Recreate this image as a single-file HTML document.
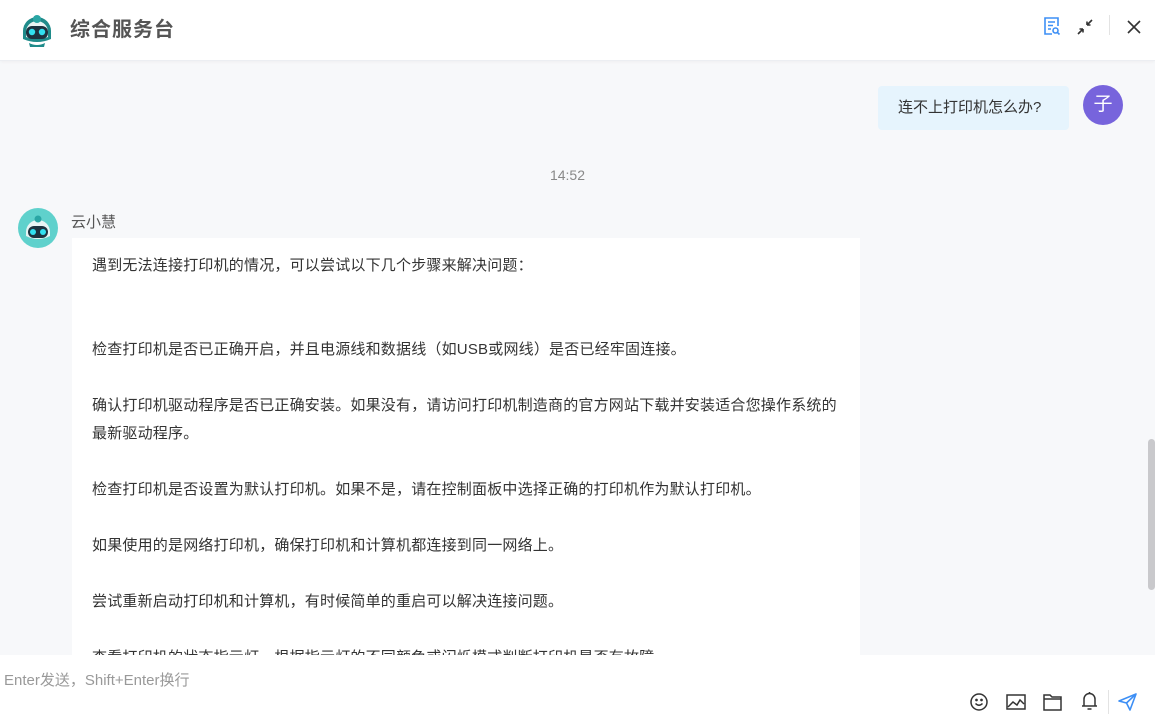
<!DOCTYPE html>
<html><head><meta charset="utf-8"><style>
*{margin:0;padding:0;box-sizing:border-box}
body{width:1155px;height:720px;overflow:hidden;background:#f7f8fa;font-family:"Liberation Sans","Noto Sans CJK SC",sans-serif;position:relative;color:#333}
.hdr{position:absolute;left:0;top:0;width:1155px;height:61px;background:#fff;border-bottom:1px solid #eceef2;box-shadow:0 1px 3px rgba(0,0,0,0.04)}
.title{position:absolute;left:70px;top:13px;font-size:20px;color:#555;font-weight:bold;letter-spacing:1px}
.abs{position:absolute}
.bubble{position:absolute;left:878px;top:86px;width:191px;height:44px;background:#e6f4fd;border-radius:4px;font-size:15px;line-height:44px;padding-left:20px;color:#333}
.uav{position:absolute;left:1083px;top:85px;width:40px;height:40px;border-radius:50%;background:#7764dc;color:#fff;font-size:19px;text-align:center;line-height:40px}
.time{position:absolute;left:0;width:1135px;top:167px;text-align:center;font-size:14px;color:#888}
.name{position:absolute;left:71px;top:211px;font-size:15px;color:#555}
.card{position:absolute;left:72px;top:238px;width:788px;height:417px;background:#fff;overflow:hidden;padding:14px 0 0 20px;font-size:15px;line-height:28px;color:#333;letter-spacing:.2px}
.card p{height:28px;white-space:nowrap}
.inp{position:absolute;left:0;top:655px;width:1155px;height:65px;background:#fff}
.ph{position:absolute;left:4px;top:14px;font-size:15px;color:#999}
.sb{position:absolute;left:1148px;top:439px;width:7px;height:151px;background:#c9c9cc;border-radius:4px}
</style></head><body>
<div class="hdr">
<svg class="abs" style="left:17px;top:9px" width="40" height="40" viewBox="0 0 40 40">
<path d="M6 22 A14 14 0 0 1 34 22 L34 30 Q20 36 6 30Z" fill="#1f8b8a"/>
<path d="M9 23 A11 11 0 0 1 31 23 L31 28 Q20 32 9 28Z" fill="#e8f4f4"/>
<rect x="9" y="17" width="22" height="13" rx="6" fill="#1d3340"/>
<circle cx="15" cy="23" r="3.2" fill="#32e0f0"/><circle cx="25" cy="23" r="3.2" fill="#32e0f0"/>
<circle cx="20" cy="10" r="4" fill="#2aa6a5"/>
<path d="M12 34 Q20 38 28 34 L27 38 L13 38Z" fill="#1f8b8a"/>
</svg>
<div class="title">综合服务台</div>
<svg class="abs" style="left:1043px;top:17px" width="18" height="19" viewBox="0 0 18 19" fill="none" stroke="#3d8ff5" stroke-width="1.6"><path d="M9 17H2V1h13v8"/><path d="M5 5h7M5 8.5h5M5 12h3"/><circle cx="12.5" cy="13.5" r="2.5"/><path d="M14.3 15.3L16.5 17.5"/></svg>
<svg class="abs" style="left:1077px;top:19px" width="16" height="16" viewBox="0 0 16 16" fill="none" stroke="#333" stroke-width="1.6"><path d="M1 15L6 10M6 10H2.5M6 10V13.5M15 1L10 6M10 6H13.5M10 6V2.5"/></svg>
<div class="abs" style="left:1109px;top:15px;width:1px;height:20px;background:#e3e3e3"></div>
<svg class="abs" style="left:1127px;top:20px" width="14" height="14" viewBox="0 0 14 14" stroke="#333" stroke-width="1.6"><path d="M1 1L13 13M13 1L1 13"/></svg>
</div>
<div class="bubble">连不上打印机怎么办?</div>
<div class="uav">子</div>
<div class="time">14:52</div>
<svg class="abs" style="left:18px;top:208px" width="40" height="40" viewBox="0 0 40 40">
<circle cx="20" cy="20" r="20" fill="#5fd1cc"/>
<path d="M8 24 A12 12 0 0 1 32 24 L32 28 Q20 34 8 28Z" fill="#e8f4f4"/>
<rect x="10" y="18" width="20" height="12" rx="6" fill="#1d3340"/>
<circle cx="15" cy="24" r="3" fill="#32e0f0"/><circle cx="25" cy="24" r="3" fill="#32e0f0"/>
<circle cx="20" cy="11" r="3.5" fill="#2aa6a5"/>
</svg>
<div class="name">云小慧</div>
<div class="card">
<p>遇到无法连接打印机的情况，可以尝试以下几个步骤来解决问题：</p>
<p></p><p></p>
<p>检查打印机是否已正确开启，并且电源线和数据线（如USB或网线）是否已经牢固连接。</p>
<p></p>
<p>确认打印机驱动程序是否已正确安装。如果没有，请访问打印机制造商的官方网站下载并安装适合您操作系统的</p>
<p>最新驱动程序。</p>
<p></p>
<p>检查打印机是否设置为默认打印机。如果不是，请在控制面板中选择正确的打印机作为默认打印机。</p>
<p></p>
<p>如果使用的是网络打印机，确保打印机和计算机都连接到同一网络上。</p>
<p></p>
<p>尝试重新启动打印机和计算机，有时候简单的重启可以解决连接问题。</p>
<p></p>
<p>查看打印机的状态指示灯，根据指示灯的不同颜色或闪烁模式判断打印机是否有故障。</p>
</div>
<div class="sb"></div>
<div class="inp">
<div class="ph">Enter发送，Shift+Enter换行</div>
<svg class="abs" style="left:970px;top:38px" width="18" height="18" viewBox="0 0 18 18" fill="none" stroke="#333" stroke-width="1.5"><circle cx="9" cy="9" r="8"/><path d="M5.5 10.5Q9 14 12.5 10.5"/><circle cx="6.5" cy="7" r=".6" fill="#333"/><circle cx="11.5" cy="7" r=".6" fill="#333"/></svg>
<svg class="abs" style="left:1006px;top:39px" width="20" height="16" viewBox="0 0 20 16" fill="none" stroke="#333" stroke-width="1.5"><rect x="1" y="1" width="18" height="14"/><path d="M2 13L7 8L11 11L14 6L18 10"/></svg>
<svg class="abs" style="left:1043px;top:38px" width="19" height="18" viewBox="0 0 19 18" fill="none" stroke="#333" stroke-width="1.5"><path d="M1 2h6l2 2h9v13H1Z"/><path d="M1 6h17"/></svg>
<svg class="abs" style="left:1081px;top:36px" width="17" height="20" viewBox="0 0 17 20" fill="none" stroke="#333" stroke-width="1.5"><path d="M3 15V8a5.5 5.5 0 0 1 11 0v7h2H1h2"/><path d="M6.5 18h4"/><path d="M8.5 1v1.5"/></svg>
<div class="abs" style="left:1108px;top:35px;width:1px;height:24px;background:#e3e3e3"></div>
<svg class="abs" style="left:1118px;top:38px" width="19" height="18" viewBox="0 0 19 18" fill="none" stroke="#3d8ff5" stroke-width="1.6" stroke-linejoin="round"><path d="M1 8L18 1L12 17L8.5 10Z"/><path d="M8.5 10L18 1"/></svg>
</div>
</body></html>
